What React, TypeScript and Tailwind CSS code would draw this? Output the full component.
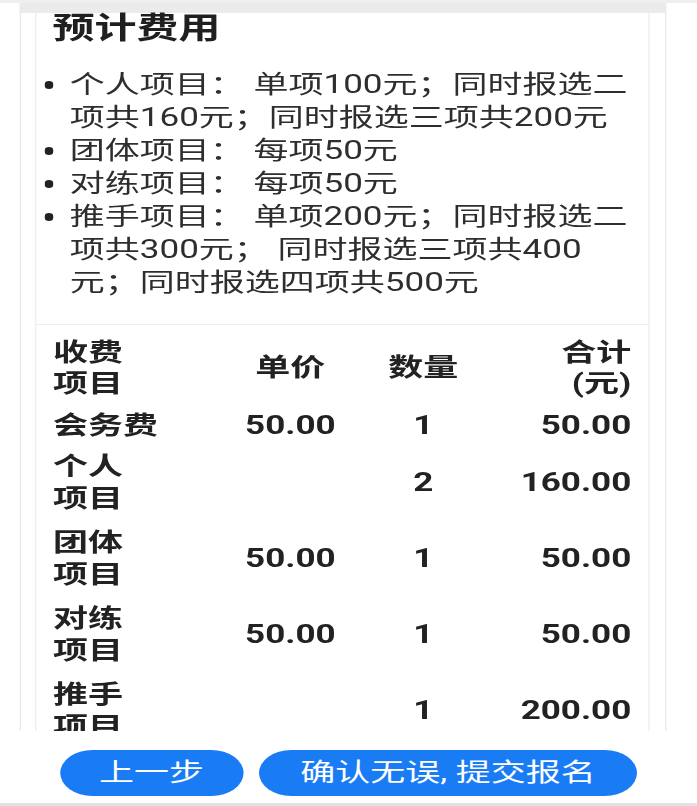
import React from "react";

const rows: { name: string[]; price: string; qty: string; total: string; h: string }[] = [
  { name: ["会务费"], price: "50.00", qty: "1", total: "50.00", h: "h-[38px]" },
  { name: ["个人", "项目"], price: "", qty: "2", total: "160.00", h: "h-[76px]" },
  { name: ["团体", "项目"], price: "50.00", qty: "1", total: "50.00", h: "h-[76px]" },
  { name: ["对练", "项目"], price: "50.00", qty: "1", total: "50.00", h: "h-[76px]" },
  { name: ["推手", "项目"], price: "", qty: "1", total: "200.00", h: "h-[76px]" },
];

const items: string[][] = [
  ["个人项目： 单项100元；同时报选二", "项共160元；同时报选三项共200元"],
  ["团体项目： 每项50元"],
  ["对练项目： 每项50元"],
  ["推手项目： 单项200元；同时报选二", "项共300元； 同时报选三项共400", "元；同时报选四项共500元"],
];

export default function App() {
  return (
    <div className="w-[697px] h-[806px] overflow-hidden bg-white">
      <div className="w-[497.86px] h-[806px] origin-top-left scale-x-[1.4] flex flex-col font-['Roboto','Noto_Sans_CJK_SC',sans-serif]">
        <div className="h-[3px] bg-[#efefef] shrink-0" />
        <div className="flex-1 overflow-hidden">
          <div className="ml-[13.5px] w-[462px] min-h-full border-x border-[#eaeaea] flex flex-col">
            <div className="h-[10px] bg-[#ebebeb] shrink-0" />
            <div className="ml-[10px] mr-[11px] border-x border-[#efefef] flex-1">
              <h2 className="pl-[12px] text-[30px] leading-[30px] font-bold text-[#1f1f1f]">预计费用</h2>
              <ul className="mt-[25px] pb-[25px] text-[25px] leading-[33px] text-[#2e2e2e]">
                {items.map((lines, i) => (
                  <li key={i} className="flex">
                    <span className="w-[24.4px] shrink-0 flex justify-start pl-[6px] pt-[12.5px]">
                      <span className="block w-[6px] h-[8px] rounded-full bg-[#222222]" />
                    </span>
                    <span className="flex flex-col">
                      {lines.map((l, j) => (
                        <span key={j} className="whitespace-nowrap">{l}</span>
                      ))}
                    </span>
                  </li>
                ))}
              </ul>
              <div className="border-t border-[#efefef] pl-[12.4px] pr-[11.6px] pt-[3px] text-[25px] font-bold text-[#222222]">
                <div className="grid grid-cols-[122px_95px_95px_1fr] items-center h-[79px] leading-[31px]">
                  <div className="flex flex-col">
                    <span>收费</span>
                    <span>项目</span>
                  </div>
                  <div className="text-center">单价</div>
                  <div className="text-center">数量</div>
                  <div className="flex flex-col items-end">
                    <span>合计</span>
                    <span>(元)</span>
                  </div>
                </div>
                {rows.map((r, i) => (
                  <div key={i} className={`grid grid-cols-[122px_95px_95px_1fr] items-center ${r.h} leading-[32px]`}>
                    <div className="flex flex-col">
                      {r.name.map((n, j) => (
                        <span key={j}>{n}</span>
                      ))}
                    </div>
                    <div className="text-center">{r.price}</div>
                    <div className="text-center">{r.qty}</div>
                    <div className="text-right">{r.total}</div>
                  </div>
                ))}
              </div>
            </div>
          </div>
        </div>
        <div className="h-[72px] shrink-0 bg-white flex items-start pt-[19px] pl-[42.9px] gap-[11.4px]">
          <button className="w-[130.7px] h-[46px] rounded-full bg-[#1a7cf4] text-white text-[25px] leading-[46px]">
            上一步
          </button>
          <button className="w-[270px] h-[46px] rounded-full bg-[#1a7cf4] text-white text-[25px] leading-[46px]">
            确认无误, 提交报名
          </button>
        </div>
        <div className="h-[3px] bg-[#e2e2e2] shrink-0" />
      </div>
    </div>
  );
}
